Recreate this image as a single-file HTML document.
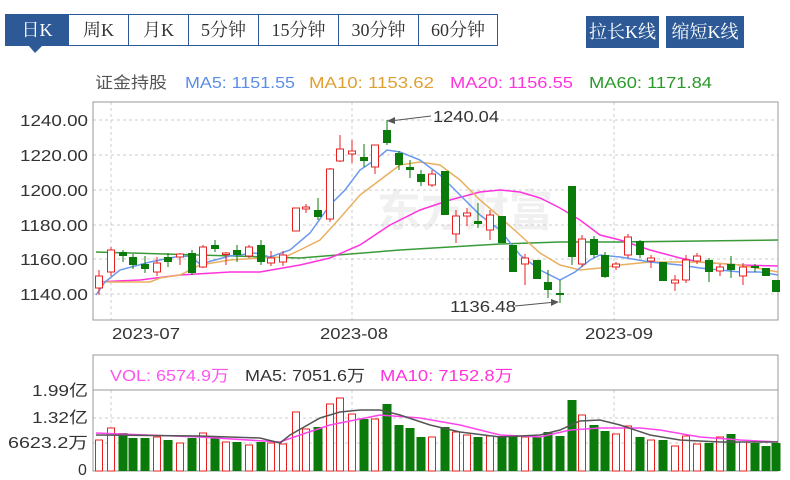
<!DOCTYPE html>
<html><head><meta charset="utf-8"><style>
body{margin:0;width:790px;height:480px;background:#fff;overflow:hidden;position:relative;font-family:"Liberation Sans","Noto Sans CJK SC",sans-serif}
.tab{position:absolute;top:14px;height:30px;border:1px solid #2d5a96;background:#fff;color:#333;font:18px "Liberation Serif","Noto Serif CJK SC",serif;line-height:30px;text-align:center;box-sizing:content-box}
.on{background:#2d5a96;color:#fff}
.btn{position:absolute;top:16px;height:32px;background:#2d5a96;color:#fff;font:18px "Liberation Serif","Noto Serif CJK SC",serif;line-height:32px;text-align:center}
svg{position:absolute;left:0;top:0}
</style></head><body>
<div class="tab on" style="left:5px;width:62px">日K</div>
<div class="tab" style="left:68px;width:59px">周K</div>
<div class="tab" style="left:128px;width:59px">月K</div>
<div class="tab" style="left:188px;width:69px">5分钟</div>
<div class="tab" style="left:258px;width:79px">15分钟</div>
<div class="tab" style="left:338px;width:79px">30分钟</div>
<div class="tab" style="left:418px;width:78px">60分钟</div>
<div class="btn" style="left:586px;width:73px">拉长K线</div>
<div class="btn" style="left:666px;width:78px">缩短K线</div>
<svg width="790" height="480" id="s" font-family="Liberation Sans, Noto Sans CJK SC, sans-serif">
<polygon points="29,46 42,46 35,53" fill="#2d5a96"/>
<g font-size="16" lengthAdjust="spacingAndGlyphs">
<text x="95" y="88" fill="#555" textLength="72" lengthAdjust="spacingAndGlyphs">证金持股</text>
<text x="185" y="88" fill="#5b8de8" textLength="110" lengthAdjust="spacingAndGlyphs">MA5: 1151.55</text>
<text x="309" y="88" fill="#e0a030" textLength="125" lengthAdjust="spacingAndGlyphs">MA10: 1153.62</text>
<text x="450" y="88" fill="#ff33dd" textLength="123" lengthAdjust="spacingAndGlyphs">MA20: 1156.55</text>
<text x="589" y="88" fill="#2a9a2a" textLength="123" lengthAdjust="spacingAndGlyphs">MA60: 1171.84</text>
</g>
<text x="465" y="226" font-size="44" fill="#f0f0f0" text-anchor="middle" font-weight="bold">东方财富</text>
<g id="grid" stroke="#ccc" stroke-dasharray="3,3"></g>
<rect x="93" y="102" width="685" height="218" fill="none" stroke="#999"/>
<g font-size="16" fill="#333">
<text x="20" y="126" textLength="68" lengthAdjust="spacingAndGlyphs">1240.00</text>
<text x="20" y="161" textLength="68" lengthAdjust="spacingAndGlyphs">1220.00</text>
<text x="20" y="196" textLength="68" lengthAdjust="spacingAndGlyphs">1200.00</text>
<text x="20" y="231" textLength="68" lengthAdjust="spacingAndGlyphs">1180.00</text>
<text x="20" y="265" textLength="68" lengthAdjust="spacingAndGlyphs">1160.00</text>
<text x="20" y="300" textLength="68" lengthAdjust="spacingAndGlyphs">1140.00</text>
</g>
<g font-size="16" fill="#333">
<text x="112" y="339" textLength="68" lengthAdjust="spacingAndGlyphs">2023-07</text>
<text x="320" y="339" textLength="68" lengthAdjust="spacingAndGlyphs">2023-08</text>
<text x="585" y="339" textLength="68" lengthAdjust="spacingAndGlyphs">2023-09</text>
</g>
<g id="ma"></g>
<g id="c"></g>
<text x="433" y="122" font-size="16" fill="#333" textLength="66" lengthAdjust="spacingAndGlyphs">1240.04</text>
<line x1="431" y1="116" x2="390" y2="121" stroke="#555"/><polygon points="387,121 395,117 395,124" fill="#555"/>
<text x="450" y="312" font-size="16" fill="#333" textLength="66" lengthAdjust="spacingAndGlyphs">1136.48</text>
<line x1="515" y1="306" x2="556" y2="302" stroke="#555"/><polygon points="559,302 551,299 551,306" fill="#555"/>
<rect x="93" y="355" width="685" height="116" fill="none" stroke="#999"/>
<line x1="93" y1="390" x2="778" y2="390" stroke="#999"/>
<g font-size="16">
<text x="110" y="381" fill="#ff55ee" textLength="119" lengthAdjust="spacingAndGlyphs">VOL: 6574.9万</text>
<text x="245" y="381" fill="#333" textLength="120" lengthAdjust="spacingAndGlyphs">MA5: 7051.6万</text>
<text x="380" y="381" fill="#ff33dd" textLength="133" lengthAdjust="spacingAndGlyphs">MA10: 7152.8万</text>
</g>
<g font-size="16" fill="#333">
<text x="32" y="396" textLength="56" lengthAdjust="spacingAndGlyphs">1.99亿</text>
<text x="32" y="423" textLength="56" lengthAdjust="spacingAndGlyphs">1.32亿</text>
<text x="8" y="448" textLength="80" lengthAdjust="spacingAndGlyphs">6623.2万</text>
<text x="78" y="475">0</text>
</g>
<g id="v"></g>
</svg>
<script>
var NS="http://www.w3.org/2000/svg";
function el(p,t,a){var e=document.createElementNS(NS,t);for(var k in a)e.setAttribute(k,a[k]);document.getElementById(p).appendChild(e);}
[120,155,190,225,259,294].forEach(function(y){el("grid","line",{x1:93,x2:778,y1:y,y2:y});});
[111,352,614].forEach(function(x){el("grid","line",{x1:x,x2:x,y1:102,y2:320});el("grid","line",{x1:x,x2:x,y1:390,y2:471});});
[418,443].forEach(function(y){el("grid","line",{x1:93,x2:778,y1:y,y2:y});});
var C=[[99,276,288,270,295,1],[111,250,272,247,276,1],[123,252,256,250,262,0],[133,257,265,254,269,0],[145,264,269,256,273,0],[157,263,272,257,276,1],[168,257,262,253,267,0],[180,254,257,253,265,1],[192,253,273,250,275,0],[203,247,267,245,268,1],[215,245,249,240,252,0],[226,253,254,252,265,1],[237,250,255,245,262,0],[249,247,256,245,258,1],[261,245,262,240,265,0],[271,258,263,251,266,1],[283,255,262,251,266,1],[296,208,231,208,231,1],[306,207,209,204,213,1],[318,210,217,198,220,0],[330,169,219,168,222,1],[340,149,161,135,162,1],[352,151,154,140,163,1],[364,157,161,144,167,0],[375,145,167,145,174,1],[387,130,143,120,145,0],[399,153,165,151,170,0],[410,167,170,160,178,0],[421,174,182,170,186,0],[432,174,185,170,187,1],[445,171,215,171,215,0],[456,216,234,210,243,1],[467,213,216,208,226,1],[478,221,224,203,228,0],[490,215,230,210,240,1],[502,216,243,216,243,0],[513,245,272,245,272,0],[525,258,264,254,285,1],[537,260,279,260,279,0],[548,282,290,270,298,0],[560,293,295,280,303,0],[572,186,257,186,265,0],[582,239,264,235,267,1],[594,239,255,236,258,0],[605,255,277,252,278,0],[616,264,267,262,270,1],[628,237,255,234,258,1],[640,241,255,240,258,0],[651,258,261,255,268,1],[663,262,281,262,281,0],[675,280,283,275,291,1],[686,260,280,255,283,1],[697,256,261,253,264,1],[709,260,272,258,282,0],[720,267,271,264,276,1],[731,264,270,256,278,0],[743,267,276,263,285,1],[755,266,268,264,272,0],[766,268,276,268,276,0],[776,280,292,280,292,0]];
var V=[440,428,433,438,438,437,440,443,438,433,436,442,442,445,442,443,444,412,429,427,404,398,414,419,419,404,425,428,437,437,427,432,435,437,436,436,435,437,437,432,436,400,415,425,431,434,426,437,440,440,446,436,444,443,437,434,442,443,446,443];
C.forEach(function(d,i){var col=d[5]?"#e82020":"#0a7a0a";var x=d[0];
el("c","line",{x1:x,x2:x,y1:d[3],y2:d[4],stroke:col});
var h=Math.max(d[2]-d[1],1.5);
if(d[5])el("c","rect",{x:x-3.5,y:d[1],width:7,height:h,fill:"#fff",stroke:col});
else el("c","rect",{x:x-4,y:d[1],width:8,height:h,fill:col});
var vy=V[i];
if(d[5])el("v","rect",{x:x-3.5,y:vy,width:7,height:471-vy,fill:"#fff",stroke:col});
else el("v","rect",{x:x-4.5,y:vy,width:9,height:471-vy,fill:col});
});
function pl(g,pts,col){el(g,"polyline",{points:pts,fill:"none",stroke:col,"stroke-width":1.5});}
pl("ma","96,252 300,258 400,250 500,244 560,242 620,242 700,241 778,240","#3a9a3a");
pl("ma","96,282 140,280 180,275 230,272 260,272 300,265 330,258 360,245 390,225 420,210 450,200 480,192 500,190 520,192 540,198 560,208 580,220 600,235 620,240 650,250 680,258 700,262 740,265 778,266","#ff33dd");
pl("ma","96,282 150,282 160,278 180,275 200,265 230,260 260,258 285,257 300,250 320,240 340,218 360,195 380,180 400,165 420,162 440,165 460,180 480,200 500,217 520,235 540,253 560,265 580,270 600,268 620,265 650,262 700,262 740,265 778,272","#e8b060");
pl("ma","96,295 105,282 120,270 150,262 175,257 190,256 200,264 230,256 255,253 270,257 290,250 310,233 330,205 345,190 360,170 375,160 387,150 400,152 420,160 440,175 460,195 480,215 500,230 520,255 540,270 560,280 575,272 590,260 600,255 620,257 650,262 680,265 700,268 720,270 740,272 760,272 778,275","#6a98ee");
pl("v","96,433 200,437 280,442 300,435 330,425 380,415 420,418 460,425 500,435 540,437 570,430 600,428 640,428 660,430 700,437 740,440 778,442","#ff44ee");
pl("v","96,435 200,436 260,438 280,443 290,435 320,418 340,412 360,410 380,410 400,415 430,425 460,432 500,437 540,435 560,430 580,421 600,420 620,425 650,435 680,440 720,442 778,442","#555");
</script>
</body></html>
